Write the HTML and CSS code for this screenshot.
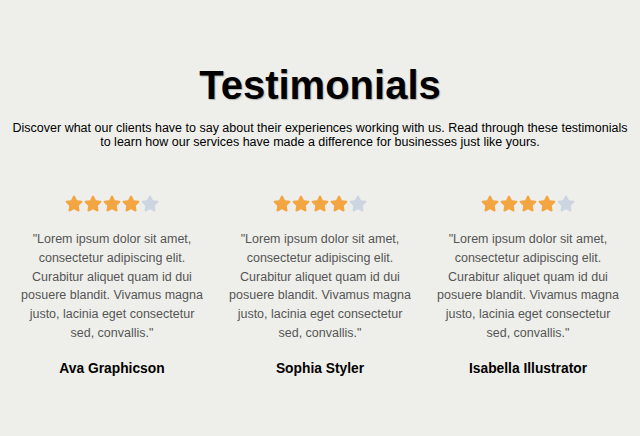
FILE: index.html
```html
<!DOCTYPE html>
<html lang="en">
<head>
<meta charset="utf-8">
<title>Testimonials</title>
<link rel="stylesheet" href="styles.css">
</head>
<body>
<section class="testimonials">
  <h1 class="title">Testimonials</h1>
  <p class="intro">Discover what our clients have to say about their experiences working with us. Read through these testimonials to learn how our services have made a difference for businesses just like yours.</p>
  <div class="grid">
    <div class="card">
      <div class="stars">
        <svg class="star on" viewBox="0 0 576 512"><path d="M259.3 17.8L194 150.2 47.9 171.5c-26.2 3.8-36.7 36.1-17.7 54.6l105.7 103-25 145.5c-4.5 26.3 23.2 46 46.4 33.7L288 439.6l130.7 68.7c23.2 12.2 50.9-7.4 46.4-33.7l-25-145.5 105.7-103c19-18.5 8.5-50.8-17.7-54.6L382 150.2 316.7 17.8c-11.7-23.6-45.6-23.9-57.4 0z"/></svg>
        <svg class="star on" viewBox="0 0 576 512"><path d="M259.3 17.8L194 150.2 47.9 171.5c-26.2 3.8-36.7 36.1-17.7 54.6l105.7 103-25 145.5c-4.5 26.3 23.2 46 46.4 33.7L288 439.6l130.7 68.7c23.2 12.2 50.9-7.4 46.4-33.7l-25-145.5 105.7-103c19-18.5 8.5-50.8-17.7-54.6L382 150.2 316.7 17.8c-11.7-23.6-45.6-23.9-57.4 0z"/></svg>
        <svg class="star on" viewBox="0 0 576 512"><path d="M259.3 17.8L194 150.2 47.9 171.5c-26.2 3.8-36.7 36.1-17.7 54.6l105.7 103-25 145.5c-4.5 26.3 23.2 46 46.4 33.7L288 439.6l130.7 68.7c23.2 12.2 50.9-7.4 46.4-33.7l-25-145.5 105.7-103c19-18.5 8.5-50.8-17.7-54.6L382 150.2 316.7 17.8c-11.7-23.6-45.6-23.9-57.4 0z"/></svg>
        <svg class="star on" viewBox="0 0 576 512"><path d="M259.3 17.8L194 150.2 47.9 171.5c-26.2 3.8-36.7 36.1-17.7 54.6l105.7 103-25 145.5c-4.5 26.3 23.2 46 46.4 33.7L288 439.6l130.7 68.7c23.2 12.2 50.9-7.4 46.4-33.7l-25-145.5 105.7-103c19-18.5 8.5-50.8-17.7-54.6L382 150.2 316.7 17.8c-11.7-23.6-45.6-23.9-57.4 0z"/></svg>
        <svg class="star off" viewBox="0 0 576 512"><path d="M259.3 17.8L194 150.2 47.9 171.5c-26.2 3.8-36.7 36.1-17.7 54.6l105.7 103-25 145.5c-4.5 26.3 23.2 46 46.4 33.7L288 439.6l130.7 68.7c23.2 12.2 50.9-7.4 46.4-33.7l-25-145.5 105.7-103c19-18.5 8.5-50.8-17.7-54.6L382 150.2 316.7 17.8c-11.7-23.6-45.6-23.9-57.4 0z"/></svg>
      </div>
      <p class="quote">"Lorem ipsum dolor sit amet, consectetur adipiscing elit. Curabitur aliquet quam id dui posuere blandit. Vivamus magna justo, lacinia eget consectetur sed, convallis."</p>
      <p class="name">Ava Graphicson</p>
    </div>
    <div class="card">
      <div class="stars">
        <svg class="star on" viewBox="0 0 576 512"><path d="M259.3 17.8L194 150.2 47.9 171.5c-26.2 3.8-36.7 36.1-17.7 54.6l105.7 103-25 145.5c-4.5 26.3 23.2 46 46.4 33.7L288 439.6l130.7 68.7c23.2 12.2 50.9-7.4 46.4-33.7l-25-145.5 105.7-103c19-18.5 8.5-50.8-17.7-54.6L382 150.2 316.7 17.8c-11.7-23.6-45.6-23.9-57.4 0z"/></svg>
        <svg class="star on" viewBox="0 0 576 512"><path d="M259.3 17.8L194 150.2 47.9 171.5c-26.2 3.8-36.7 36.1-17.7 54.6l105.7 103-25 145.5c-4.5 26.3 23.2 46 46.4 33.7L288 439.6l130.7 68.7c23.2 12.2 50.9-7.4 46.4-33.7l-25-145.5 105.7-103c19-18.5 8.5-50.8-17.7-54.6L382 150.2 316.7 17.8c-11.7-23.6-45.6-23.9-57.4 0z"/></svg>
        <svg class="star on" viewBox="0 0 576 512"><path d="M259.3 17.8L194 150.2 47.9 171.5c-26.2 3.8-36.7 36.1-17.7 54.6l105.7 103-25 145.5c-4.5 26.3 23.2 46 46.4 33.7L288 439.6l130.7 68.7c23.2 12.2 50.9-7.4 46.4-33.7l-25-145.5 105.7-103c19-18.5 8.5-50.8-17.7-54.6L382 150.2 316.7 17.8c-11.7-23.6-45.6-23.9-57.4 0z"/></svg>
        <svg class="star on" viewBox="0 0 576 512"><path d="M259.3 17.8L194 150.2 47.9 171.5c-26.2 3.8-36.7 36.1-17.7 54.6l105.7 103-25 145.5c-4.5 26.3 23.2 46 46.4 33.7L288 439.6l130.7 68.7c23.2 12.2 50.9-7.4 46.4-33.7l-25-145.5 105.7-103c19-18.5 8.5-50.8-17.7-54.6L382 150.2 316.7 17.8c-11.7-23.6-45.6-23.9-57.4 0z"/></svg>
        <svg class="star off" viewBox="0 0 576 512"><path d="M259.3 17.8L194 150.2 47.9 171.5c-26.2 3.8-36.7 36.1-17.7 54.6l105.7 103-25 145.5c-4.5 26.3 23.2 46 46.4 33.7L288 439.6l130.7 68.7c23.2 12.2 50.9-7.4 46.4-33.7l-25-145.5 105.7-103c19-18.5 8.5-50.8-17.7-54.6L382 150.2 316.7 17.8c-11.7-23.6-45.6-23.9-57.4 0z"/></svg>
      </div>
      <p class="quote">"Lorem ipsum dolor sit amet, consectetur adipiscing elit. Curabitur aliquet quam id dui posuere blandit. Vivamus magna justo, lacinia eget consectetur sed, convallis."</p>
      <p class="name">Sophia Styler</p>
    </div>
    <div class="card">
      <div class="stars">
        <svg class="star on" viewBox="0 0 576 512"><path d="M259.3 17.8L194 150.2 47.9 171.5c-26.2 3.8-36.7 36.1-17.7 54.6l105.7 103-25 145.5c-4.5 26.3 23.2 46 46.4 33.7L288 439.6l130.7 68.7c23.2 12.2 50.9-7.4 46.4-33.7l-25-145.5 105.7-103c19-18.5 8.5-50.8-17.7-54.6L382 150.2 316.7 17.8c-11.7-23.6-45.6-23.9-57.4 0z"/></svg>
        <svg class="star on" viewBox="0 0 576 512"><path d="M259.3 17.8L194 150.2 47.9 171.5c-26.2 3.8-36.7 36.1-17.7 54.6l105.7 103-25 145.5c-4.5 26.3 23.2 46 46.4 33.7L288 439.6l130.7 68.7c23.2 12.2 50.9-7.4 46.4-33.7l-25-145.5 105.7-103c19-18.5 8.5-50.8-17.7-54.6L382 150.2 316.7 17.8c-11.7-23.6-45.6-23.9-57.4 0z"/></svg>
        <svg class="star on" viewBox="0 0 576 512"><path d="M259.3 17.8L194 150.2 47.9 171.5c-26.2 3.8-36.7 36.1-17.7 54.6l105.7 103-25 145.5c-4.5 26.3 23.2 46 46.4 33.7L288 439.6l130.7 68.7c23.2 12.2 50.9-7.4 46.4-33.7l-25-145.5 105.7-103c19-18.5 8.5-50.8-17.7-54.6L382 150.2 316.7 17.8c-11.7-23.6-45.6-23.9-57.4 0z"/></svg>
        <svg class="star on" viewBox="0 0 576 512"><path d="M259.3 17.8L194 150.2 47.9 171.5c-26.2 3.8-36.7 36.1-17.7 54.6l105.7 103-25 145.5c-4.5 26.3 23.2 46 46.4 33.7L288 439.6l130.7 68.7c23.2 12.2 50.9-7.4 46.4-33.7l-25-145.5 105.7-103c19-18.5 8.5-50.8-17.7-54.6L382 150.2 316.7 17.8c-11.7-23.6-45.6-23.9-57.4 0z"/></svg>
        <svg class="star off" viewBox="0 0 576 512"><path d="M259.3 17.8L194 150.2 47.9 171.5c-26.2 3.8-36.7 36.1-17.7 54.6l105.7 103-25 145.5c-4.5 26.3 23.2 46 46.4 33.7L288 439.6l130.7 68.7c23.2 12.2 50.9-7.4 46.4-33.7l-25-145.5 105.7-103c19-18.5 8.5-50.8-17.7-54.6L382 150.2 316.7 17.8c-11.7-23.6-45.6-23.9-57.4 0z"/></svg>
      </div>
      <p class="quote">"Lorem ipsum dolor sit amet, consectetur adipiscing elit. Curabitur aliquet quam id dui posuere blandit. Vivamus magna justo, lacinia eget consectetur sed, convallis."</p>
      <p class="name">Isabella Illustrator</p>
    </div>
  </div>
</section>
</body>
</html>
```

FILE: styles.css
```css
html, body {
  margin: 0;
  padding: 0;
  background: #eeefeb;
}
body {
  font-family: "Liberation Sans", Arial, sans-serif;
  color: #000;
}
.testimonials {
  padding: 62px 8px 40px;
  text-align: center;
}
.title {
  margin: 0;
  font-size: 40px;
  line-height: 46px;
  font-weight: 700;
  text-shadow: 1px 1px 1px rgba(0,0,0,0.25);
}
.intro {
  margin: 13px 0 0;
  font-size: 12.5px;
  line-height: 14px;
}
.grid {
  display: grid;
  grid-template-columns: repeat(3, 1fr);
  margin-top: 46px;
}
.card {
  padding: 0 12px;
  display: flex;
  flex-direction: column;
  align-items: center;
}
.stars {
  display: flex;
  gap: 1px;
}
.star {
  width: 18px;
  height: 17px;
}
.star.on { fill: #f2a541; }
.star.off { fill: #cdd6e0; }
.quote {
  margin: 18px 0 0;
  font-size: 12.5px;
  line-height: 18.75px;
  color: #555;
}
.name {
  margin: 18px 0 0;
  font-size: 13.8px;
  font-weight: 700;
}
```
